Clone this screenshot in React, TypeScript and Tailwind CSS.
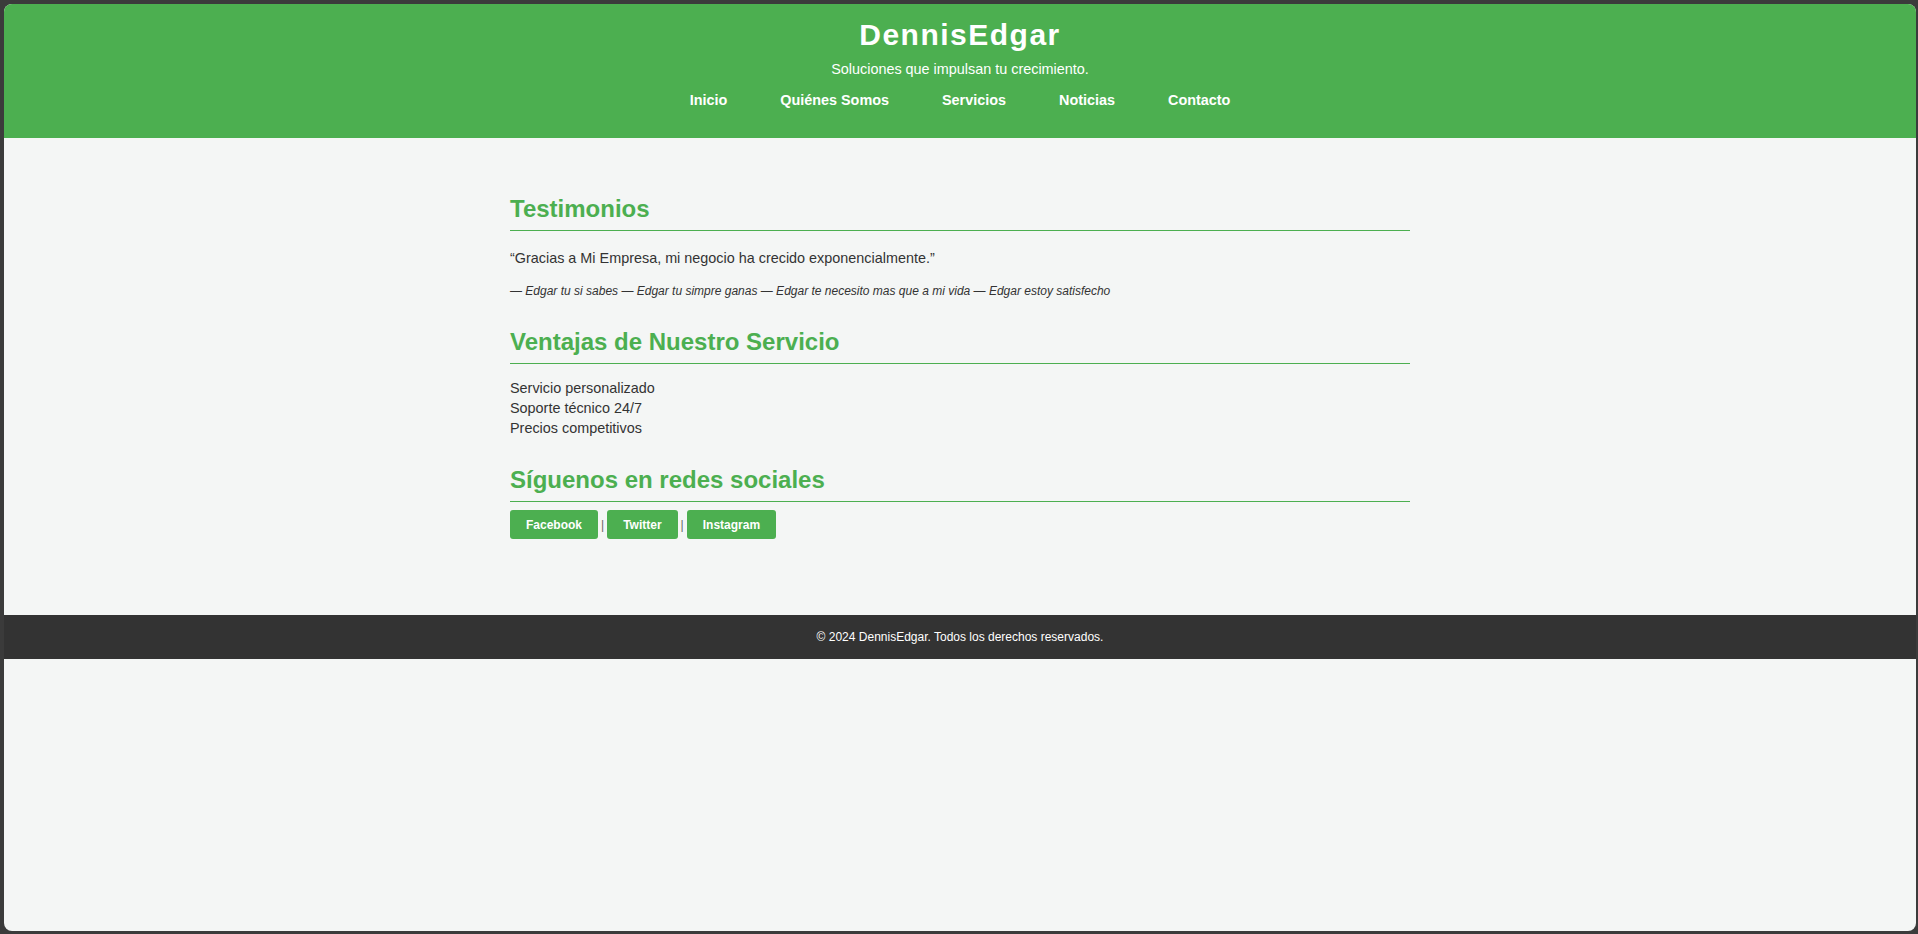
import React from 'react';

const navLinks = ['Inicio', 'Quiénes Somos', 'Servicios', 'Noticias', 'Contacto'];

const ventajas = ['Servicio personalizado', 'Soporte técnico 24/7', 'Precios competitivos'];

const redes = ['Facebook', 'Twitter', 'Instagram'];

const SectionTitle = ({ children }: { children: React.ReactNode }) => (
  <h2 className="text-[24px] leading-[28px] font-bold text-[#4caf50] pb-[7px] border-b border-[#4caf50]">
    {children}
  </h2>
);

const App = () => {
  return (
    <div
      className="h-[934px] bg-[#3b3b3b] pt-[4px] pl-[4px] pr-[2px] pb-[3px]"
      style={{ fontFamily: '"Liberation Sans", Arial, sans-serif' }}
    >
      <div className="h-full rounded-[8px] overflow-hidden bg-[#f4f6f5] text-[#333]">
        <header className="h-[134px] bg-[#4caf50] text-white flex flex-col items-center pt-[14px]">
          <h1 className="text-[30px] leading-[34px] font-bold tracking-[1.5px]">DennisEdgar</h1>
          <p className="mt-[7px] text-[14.4px] leading-[20px]">Soluciones que impulsan tu crecimiento.</p>
          <nav className="mt-[11px] flex gap-[53px]">
            {navLinks.map((link) => (
              <a key={link} href="#" className="text-[14.4px] leading-[20px] font-bold text-white">
                {link}
              </a>
            ))}
          </nav>
        </header>

        <main className="w-[900px] mx-auto pt-[57px] pb-[76px]">
          <section>
            <SectionTitle>Testimonios</SectionTitle>
            <p className="mt-[17px] text-[14.4px] leading-[20px]">
              “Gracias a Mi Empresa, mi negocio ha crecido exponencialmente.”
            </p>
            <p className="mt-[15px] text-[12px] leading-[16px] italic">
              — Edgar tu si sabes — Edgar tu simpre ganas — Edgar te necesito mas que a mi vida — Edgar estoy
              satisfecho
            </p>
          </section>

          <section className="mt-[29px]">
            <SectionTitle>Ventajas de Nuestro Servicio</SectionTitle>
            <ul className="mt-[14px]">
              {ventajas.map((item) => (
                <li key={item} className="text-[14.4px] leading-[20px]">
                  {item}
                </li>
              ))}
            </ul>
          </section>

          <section className="mt-[28px]">
            <SectionTitle>Síguenos en redes sociales</SectionTitle>
            <div className="mt-[8px] flex items-center gap-[3px]">
              {redes.map((red, i) => (
                <React.Fragment key={red}>
                  {i > 0 && <span className="text-[12px] text-[#666]">|</span>}
                  <a
                    href="#"
                    className="h-[29px] px-[16px] flex items-center rounded-[3px] bg-[#4caf50] text-white text-[12px] font-bold"
                  >
                    {red}
                  </a>
                </React.Fragment>
              ))}
            </div>
          </section>
        </main>

        <footer className="h-[44px] bg-[#333] text-white flex items-center justify-center text-[12px]">
          © 2024 DennisEdgar. Todos los derechos reservados.
        </footer>
      </div>
    </div>
  );
};

export default App;
